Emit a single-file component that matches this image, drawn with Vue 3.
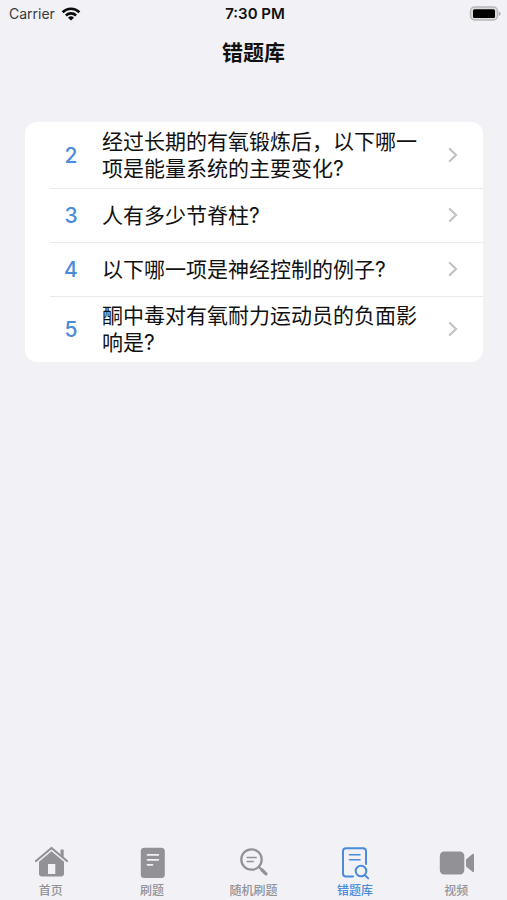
<script setup>
import { ref } from 'vue'

const questions = [
  { id: 2, text: '经过长期的有氧锻炼后，以下哪一项是能量系统的主要变化?' },
  { id: 3, text: '人有多少节脊柱?' },
  { id: 4, text: '以下哪一项是神经控制的例子?' },
  { id: 5, text: '酮中毒对有氧耐力运动员的负面影响是?' },
]

const tabs = [
  { key: 'home', label: '首页' },
  { key: 'practice', label: '刷题' },
  { key: 'random', label: '随机刷题' },
  { key: 'mistakes', label: '错题库' },
  { key: 'video', label: '视频' },
]
const active = ref('mistakes')
</script>

<template>
  <div class="screen">
    <div class="status">
      <div class="carrier">
        <span>Carrier</span>
        <svg class="wifi" viewBox="0 0 20 14" width="20" height="14" aria-hidden="true">
          <g fill="none" stroke="#0b0b0d" stroke-width="2.6">
            <path d="M1.6 5.2a12 12 0 0 1 16.8 0" />
            <path d="M4.9 8.5a7.3 7.3 0 0 1 10.2 0" />
          </g>
          <path d="M10 13.6 7 10.7a4.3 4.3 0 0 1 6 0Z" fill="#0b0b0d" />
        </svg>
      </div>
      <time class="clock">7:30 PM</time>
      <svg class="battery" viewBox="0 0 32 15" width="32" height="15" aria-hidden="true">
        <rect x="1.5" y="1" width="27" height="13" rx="4" fill="#dcdcdf" stroke="#b8b8bb" stroke-width="1.4" />
        <rect x="4" y="3.2" width="22" height="8.800" rx="1.500" fill="#000" />
        <path d="M29.8 5.5c2.4 1 2.4 3.500 0 4.500Z" fill="#a9a9ac" />
      </svg>
    </div>

    <header class="nav">
      <h1>错题库</h1>
    </header>

    <main class="content">
      <ul class="list">
        <li v-for="q in questions" :key="q.id">
          <a class="row" href="#">
            <span class="num">{{ q.id }}</span>
            <span class="text">{{ q.text }}</span>
            <svg class="chevron" viewBox="0 0 10 16" width="10" height="16" aria-hidden="true">
              <path d="M1.8 2 8 8l-6.200 6" fill="none" stroke="#c2c2c5" stroke-width="2.2" stroke-linecap="round" stroke-linejoin="miter" />
            </svg>
          </a>
        </li>
      </ul>
    </main>

    <nav class="tabs">
      <button
        v-for="tab in tabs"
        :key="tab.key"
        type="button"
        class="tab"
        :class="{ active: tab.key === active }"
        @click="active = tab.key"
      >
        <svg v-if="tab.key === 'home'" viewBox="0 0 36 36" width="36" height="36" aria-hidden="true">
          <path d="M3 17 18.500 4 34 17" fill="none" stroke="currentColor" stroke-width="2.2" stroke-linecap="round" stroke-linejoin="round" />
          <path d="M27.500 5.500h3.200v8l-3.200-2.700Z" fill="currentColor" />
          <path fill-rule="evenodd" d="M18.500 7.200 31 17.800V29.500a3 3 0 0 1-3 3H9a3 3 0 0 1-3-3V17.800ZM15 20v10h7.300V20Z" fill="currentColor" />
        </svg>
        <svg v-else-if="tab.key === 'practice'" viewBox="0 0 36 36" width="36" height="36" aria-hidden="true">
          <rect x="6.800" y="3.800" width="24" height="30.200" rx="3.500" fill="currentColor" />
          <path d="M13.500 10.800h10.800M13.500 15.800h10.800M13.500 20.800h5" stroke="#f1f1f6" stroke-width="1.8" stroke-linecap="round" />
        </svg>
        <svg v-else-if="tab.key === 'random'" viewBox="0 0 36 36" width="36" height="36" aria-hidden="true">
          <g fill="none" stroke="currentColor" stroke-linecap="round">
            <circle cx="15.500" cy="15.500" r="10.200" stroke-width="2.300" />
            <path d="m23 23 2.500 2.500" stroke-width="2.200" />
            <path d="m26 26 4 3.800" stroke-width="3.200" />
            <path d="M11.200 13.500h9M11.200 17.500h6" stroke-width="1.600" />
          </g>
        </svg>
        <svg v-else-if="tab.key === 'mistakes'" viewBox="0 0 36 36" width="36" height="36" aria-hidden="true">
          <g fill="none" stroke="currentColor" stroke-width="2" stroke-linecap="round">
            <path d="M16 32.500H9a3 3 0 0 1-3-3V7.200a3 3 0 0 1 3-3h17a3 3 0 0 1 3 3V20" />
            <path d="M12.500 10.800h10.500M12.500 15.800h10.500" stroke-width="1.600" />
            <circle cx="24" cy="27" r="5.300" />
            <path d="m28 31.200 3.200 3.200" />
          </g>
        </svg>
        <svg v-else viewBox="0 0 36 36" width="36" height="36" aria-hidden="true">
          <rect x="1.800" y="7.500" width="24.500" height="23" rx="4.500" fill="currentColor" />
          <path d="M28 15.500 34.500 10c.8-.7 1.500-.3 1.500.6v16.600c0 .9-.7 1.300-1.500.6L28 22.500Z" fill="currentColor" />
        </svg>
        <span>{{ tab.label }}</span>
      </button>
    </nav>
  </div>
</template>

<style>
body {
  margin: 0;
  background: #f1f1f6;
}
</style>

<style scoped>
.screen {
  min-height: 100vh;
  display: flex;
  flex-direction: column;
  background: #f1f1f6;
  color: #111;
  font-family: Inter, "Noto Sans CJK SC", sans-serif;
}
.status {
  display: grid;
  grid-template-columns: 1fr auto 1fr;
  align-items: center;
  height: 27px;
  padding: 0 6px 0 9px;
  font-size: 14px;
}
.carrier {
  display: flex;
  align-items: center;
  gap: 6px;
  color: #3a3a3d;
}
.clock {
  font-size: 15px;
  font-weight: 600;
}
.battery {
  justify-self: end;
}
.nav {
  display: flex;
  align-items: center;
  justify-content: center;
  height: 52px;
}
h1 {
  margin: 0;
  font-size: 21px;
  line-height: 28px;
  font-weight: 700;
}
.content {
  flex: 1;
  padding: 43px 24px 24px 25px;
}
.list {
  margin: 0;
  padding: 0;
  list-style: none;
  background: #fff;
  border-radius: 12px;
  overflow: hidden;
}
.row {
  display: flex;
  align-items: center;
  box-sizing: border-box;
  min-height: 54px;
  margin-left: 25px;
  padding: 6px 25px 6px 0;
  color: inherit;
  text-decoration: none;
}
li + li .row {
  padding-top: 5px;
  border-top: 1px solid #e9e9eb;
}
.num {
  flex: none;
  width: 42px;
  margin-right: 10px;
  text-align: center;
  font-size: 21px;
  font-weight: 500;
  color: #4a8bdc;
}
.text {
  flex: 1;
  padding-right: 24px;
  font-size: 21px;
  line-height: 27px;
}
.chevron {
  flex: none;
}
.tabs {
  display: flex;
  height: 56px;
}
.tab {
  flex: 1;
  display: flex;
  flex-direction: column;
  align-items: center;
  justify-content: flex-start;
  gap: 3px;
  padding: 0;
  border: 0;
  background: none;
  color: #929296;
  font-family: inherit;
  font-size: 12px;
  line-height: 16px;
  font-weight: 500;
  cursor: pointer;
}
.tab.active {
  color: #4a8bdc;
}
</style>
